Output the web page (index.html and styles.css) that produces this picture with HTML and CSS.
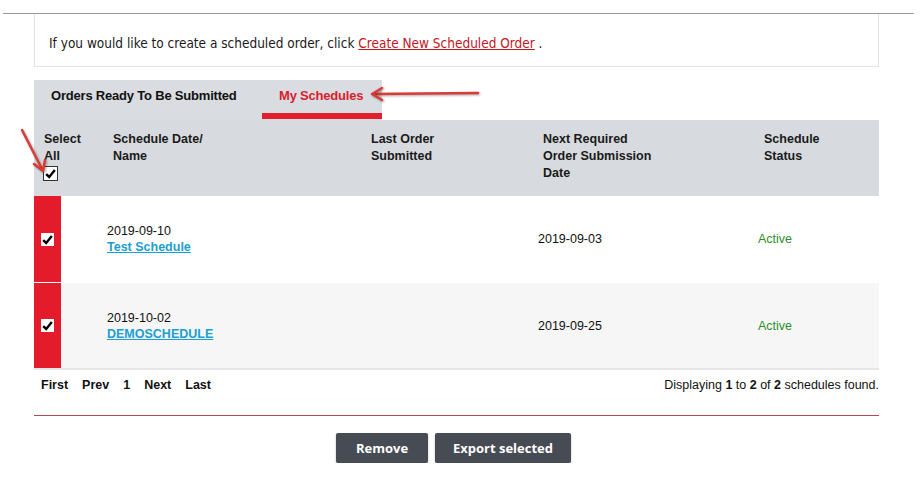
FILE: index.html
```html
<!DOCTYPE html>
<html lang="en">
<head>
  <meta charset="UTF-8" />
  <title>My Schedules</title>
  <link rel="stylesheet" href="styles.css">
</head>
<body>
  <div class="topline"></div>

  <div class="page">
    <div class="info">
      If you would like to create a scheduled order, click <a href="#">Create New Scheduled Order</a> .
    </div>

    <div class="tabs">
      <a class="tab" href="#">Orders Ready To Be Submitted</a>
      <a class="tab active" href="#">My Schedules</a>
    </div>

    <div class="thead">
      <div class="th">Select<br>All<br><span class="cb cb-head"><svg viewBox="0 0 12 12"><path d="M2 6.5 L4.8 9.2 L10 2.8" /></svg></span></div>
      <div class="th">Schedule Date/<br>Name</div>
      <div class="th">Last Order<br>Submitted</div>
      <div class="th">Next Required<br>Order Submission<br>Date</div>
      <div class="th">Schedule<br>Status</div>
    </div>

    <div class="row">
      <div class="mark"><span class="cb"><svg viewBox="0 0 12 12"><path d="M2 6.5 L4.8 9.2 L10 2.8" /></svg></span></div>
      <div class="cell name">2019-09-10<br><a href="#">Test Schedule</a></div>
      <div class="cell">2019-09-03</div>
      <div class="cell status">Active</div>
    </div>
    <div class="row alt">
      <div class="mark"><span class="cb"><svg viewBox="0 0 12 12"><path d="M2 6.5 L4.8 9.2 L10 2.8" /></svg></span></div>
      <div class="cell name">2019-10-02<br><a href="#">DEMOSCHEDULE</a></div>
      <div class="cell">2019-09-25</div>
      <div class="cell status">Active</div>
    </div>

    <div class="pager">
      <div class="pages">
        <a href="#">First</a><a href="#">Prev</a><a href="#">1</a><a href="#">Next</a><a href="#">Last</a>
      </div>
      <div class="count">Displaying <b>1</b> to <b>2</b> of <b>2</b> schedules found.</div>
    </div>

    <div class="actions">
      <button>Remove</button>
      <button>Export selected</button>
    </div>

    <!-- annotation arrows -->
    <svg class="arrow arrow-tab" width="120" height="20" viewBox="0 0 120 20">
      <path d="M112 9 L8 10" />
      <path d="M16 4 L6 10 L16 16" />
    </svg>
    <svg class="arrow arrow-select" width="40" height="50" viewBox="0 0 40 50">
      <path d="M4 4 L24 43" />
      <path d="M16 38 L25 45 L27 34" />
    </svg>
  </div>
</body>
</html>
```

FILE: styles.css
```css
body {
  margin: 0;
  background: #fff;
  color: #111;
  font-family: "Liberation Sans", Arial, sans-serif;
  font-size: 12.5px;
}

.topline {
  margin: 13px 10px 0 3px;
  border-top: 1px solid #9a9a9a;
}

.page {
  position: relative;
  margin: 0 45px 0 34px;
}

.info {
  height: 52px;
  line-height: 58px;
  padding-left: 14px;
  border: 1px solid #e3e3e3;
  border-top: none;
  font-family: "Liberation Sans Narrow", "DejaVu Sans Condensed", sans-serif;
  font-size: 13.5px;
  color: #1a1a1a;
}

.info a {
  color: #c3161f;
}

.tabs {
  display: flex;
  width: 348px;
  height: 40px;
  margin-top: 13px;
  background: #d9dce0;
}

.tab {
  display: block;
  box-sizing: border-box;
  height: 40px;
  padding-left: 17px;
  line-height: 31px;
  white-space: nowrap;
  font-weight: bold;
  font-size: 13px;
  letter-spacing: -0.2px;
  color: #111;
  text-decoration: none;
}

.tab:first-child {
  width: 228px;
}

.tab.active {
  width: 120px;
  height: 39px;
  color: #d9202d;
  border-bottom: 6px solid #e21f2c;
}

.thead {
  display: grid;
  grid-template-columns: 69px 258px 172px 221px 1fr;
  height: 76px;
  padding: 11px 0 0 10px;
  box-sizing: border-box;
  background: #d7dade;
  font-weight: bold;
  line-height: 17px;
  color: #1a1a1a;
}

.cb {
  display: inline-block;
  width: 13px;
  height: 13px;
  background: #fff;
  vertical-align: top;
}

.cb svg {
  display: block;
  width: 13px;
  height: 13px;
}

.cb path {
  fill: none;
  stroke: #000;
  stroke-width: 2.2;
}

.cb-head {
  margin-top: 1px;
  margin-left: -1px;
  border: 1px solid #333;
  width: 13px;
  height: 13px;
}

.row {
  display: grid;
  grid-template-columns: 27px 46px 431px 220px 1fr;
  height: 86px;
  align-items: center;
  background: #fff;
}

.row.alt {
  height: 85px;
  background: #f6f6f6;
  border-top: 1px solid #fff;
  border-bottom: 2px solid #e6e6e6;
}

.mark {
  grid-column: 1;
  align-self: stretch;
  display: flex;
  align-items: center;
  justify-content: center;
  background: #e31b2b;
}

.cell {
  color: #111;
  line-height: 16px;
}

.name {
  grid-column: 3;
}

.name a {
  color: #1b9fd0;
  font-weight: bold;
}

.status {
  color: #2c8f2c;
}

.pager {
  display: flex;
  justify-content: space-between;
  align-items: center;
  height: 30px;
  padding: 0 0 15px 7px;
  border-bottom: 1px solid #b24a52;
}

.pages a {
  margin-right: 14px;
  font-weight: bold;
  color: #111;
  text-decoration: none;
}

.count {
  color: #111;
}

.actions {
  display: flex;
  justify-content: center;
  gap: 7px;
  margin-top: 17px;
  padding-right: 6px;
}

.actions button {
  height: 30px;
  padding: 0 18px;
  border: none;
  border-radius: 2px;
  background: #474b53;
  color: #fff;
  font-family: "Open Sans", sans-serif;
  font-weight: bold;
  font-size: 13px;
  box-shadow: 0 1px 2px rgba(0, 0, 0, 0.3);
}

.actions button:first-child {
  width: 92px;
}

.arrow {
  position: absolute;
  overflow: visible;
}

.arrow path {
  fill: none;
  stroke: #db3b36;
  stroke-width: 2.5;
  stroke-linecap: round;
  stroke-linejoin: round;
  filter: drop-shadow(1px 1px 1px rgba(0, 0, 0, 0.35));
}

.arrow-tab {
  left: 332px;
  top: 70px;
}

.arrow-select {
  left: -16px;
  top: 112px;
}
```
